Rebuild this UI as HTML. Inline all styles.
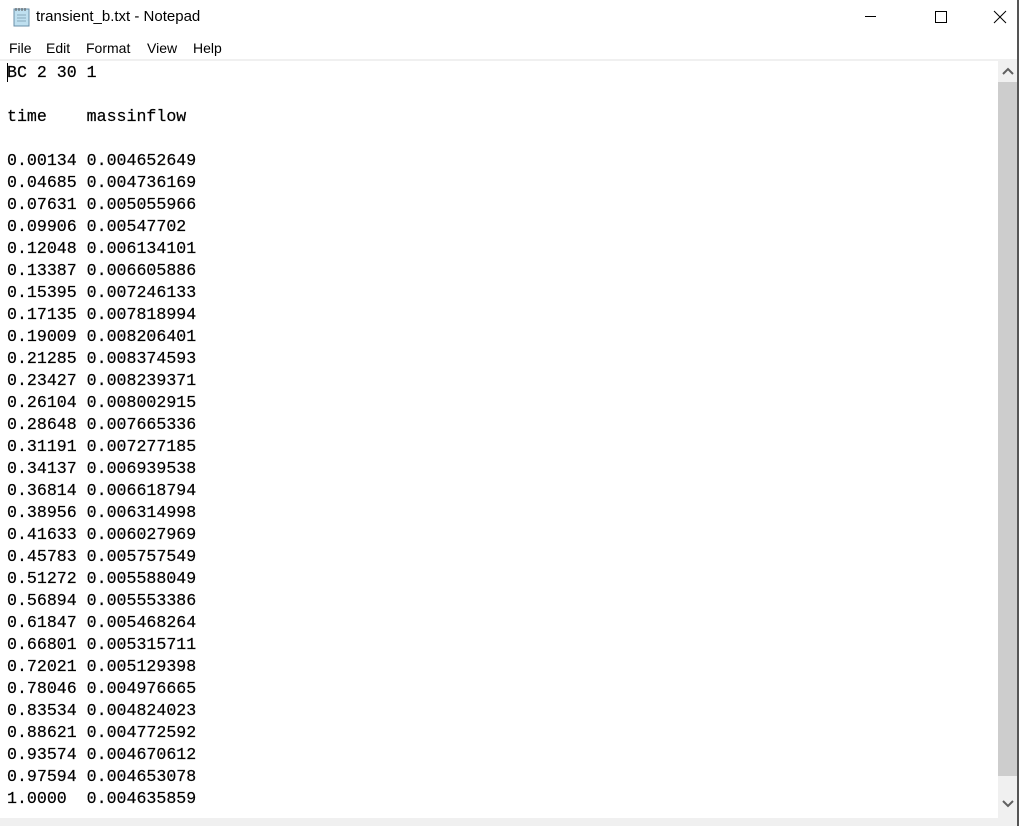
<!DOCTYPE html>
<html><head><style>
*{margin:0;padding:0;box-sizing:border-box}
body{width:1019px;height:826px;background:#fff;position:relative;overflow:hidden;font-family:"Liberation Sans",sans-serif}
.edge{position:absolute;right:0;top:0;width:2px;height:826px;background:#555}
.title{position:absolute;left:36px;top:8px;font-size:15px;color:#000}
.menu{position:absolute;top:40px;left:0;font-size:14px;color:#000}
.menu span{position:absolute;top:0;white-space:nowrap}
.sep{position:absolute;top:59px;left:0;width:1017px;height:2px;background:#f0f0f0}
pre{position:absolute;left:7px;top:62px;font-family:"Liberation Mono",monospace;font-size:16.6px;line-height:22px;color:#000;-webkit-text-stroke:0.2px #000}
.sb{position:absolute;left:998px;top:61px;width:19px;height:757px;background:#f0f0f0}
.thumb{position:absolute;left:998px;top:82px;width:19px;height:694px;background:#cdcdcd}
.bot{position:absolute;left:0;top:818px;width:1017px;height:8px;background:#f0f0f0}
.cursor{position:absolute;left:7px;top:63px;width:1px;height:19px;background:#000}
</style></head><body>
<svg style="position:absolute;left:12px;top:7px" width="20" height="20" viewBox="0 0 20 20"><rect x="2" y="2" width="15" height="17" fill="#bfe0f0" stroke="#6a8fa8"/><path d="M4 1v3M7 1v3M10 1v3M13 1v3" stroke="#555"/><path d="M5 8h9M5 11h9M5 14h9" stroke="#8ab"/></svg>
<div class="title">transient_b.txt - Notepad</div>
<svg style="position:absolute;left:862px;top:10px" width="160" height="16"><path d="M3 6.5h11" stroke="#000"/><rect x="73.5" y="1.5" width="11" height="11" fill="none" stroke="#000"/><path d="M132 1l12 12M144 1l-12 12" stroke="#000"/></svg>
<div class="menu"><span style="left:9px">File</span><span style="left:46px">Edit</span><span style="left:86px">Format</span><span style="left:147px">View</span><span style="left:193px">Help</span></div>
<div class="sep"></div>
<pre>BC 2 30 1

time    massinflow

0.00134 0.004652649
0.04685 0.004736169
0.07631 0.005055966
0.09906 0.00547702
0.12048 0.006134101
0.13387 0.006605886
0.15395 0.007246133
0.17135 0.007818994
0.19009 0.008206401
0.21285 0.008374593
0.23427 0.008239371
0.26104 0.008002915
0.28648 0.007665336
0.31191 0.007277185
0.34137 0.006939538
0.36814 0.006618794
0.38956 0.006314998
0.41633 0.006027969
0.45783 0.005757549
0.51272 0.005588049
0.56894 0.005553386
0.61847 0.005468264
0.66801 0.005315711
0.72021 0.005129398
0.78046 0.004976665
0.83534 0.004824023
0.88621 0.004772592
0.93574 0.004670612
0.97594 0.004653078
1.0000  0.004635859</pre>
<div class="cursor"></div>
<div class="sb"></div><div class="thumb"></div>
<svg style="position:absolute;left:1001px;top:65px" width="14" height="12"><path d="M2 9l5-5 5 5" stroke="#606060" stroke-width="2" fill="none"/></svg>
<svg style="position:absolute;left:1001px;top:798px" width="14" height="12"><path d="M2 3l5 5 5-5" stroke="#606060" stroke-width="2" fill="none"/></svg>
<div class="bot"></div>
<div class="edge"></div>
</body></html>
